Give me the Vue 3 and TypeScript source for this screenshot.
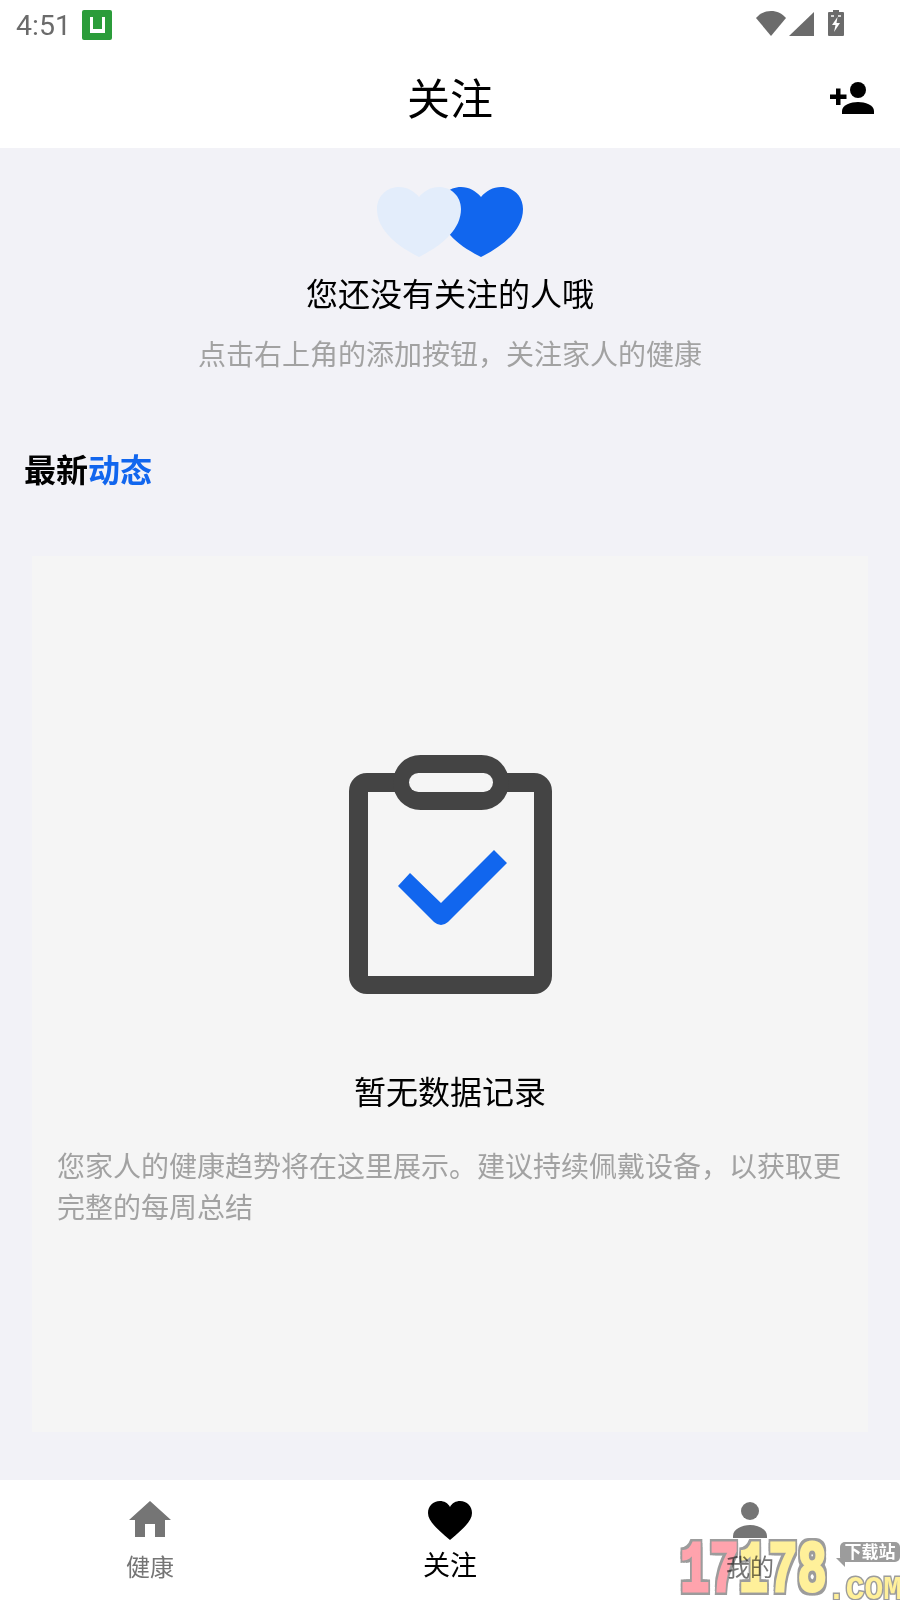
<script setup lang="ts">
const tabs = [
  { label: '健康', key: 'home', active: false },
  { label: '关注', key: 'heart', active: true },
  { label: '我的', key: 'user', active: false },
];
</script>

<template>
  <div class="page">
    <div class="status-bar">
      <div class="status-left">
        <span class="time">4:51</span>
        <span class="app-badge"><span class="app-badge-u"></span></span>
      </div>
      <div class="status-right">
        <svg class="wifi" width="30" height="25" viewBox="0 0 30 25"><path d="M0 7C4 2.500 9 0 15 0s11 2.500 15 7L15 25z" fill="#6b6b6b"/></svg>
        <svg class="signal" width="25" height="24" viewBox="0 0 25 24"><path d="M25 0v24H0z" fill="#6b6b6b"/></svg>
        <svg class="battery" width="16" height="26" viewBox="0 0 16 26"><path d="M5 0h6v2h4a1 1 0 0 1 1 1v22a1 1 0 0 1-1 1H1a1 1 0 0 1-1-1V3a1 1 0 0 1 1-1h4z" fill="#6b6b6b"/><path d="M3 5h3v2H3zM10 5h3v2h-3z" fill="#d8d8d8"/><path d="M9.500 7L4 15h3.500L6 22l6-9H8.500z" fill="#fff"/></svg>
      </div>
    </div>

    <header class="title-bar">
      <h1>关注</h1>
      <svg class="add-user" width="44" height="32" viewBox="0 0 44 32">
        <path d="M0 12.500h6V6.500h4.500v6h6V17h-6v6H6v-6H0z" fill="#000"/>
        <circle cx="28" cy="8" r="8" fill="#000"/>
        <path d="M12 32v-3c0-6 9-9 16-9s16 3 16 9v3z" fill="#000"/>
      </svg>
    </header>

    <main class="content">
      <section class="empty-follow">
        <div class="hearts">
          <svg width="146" height="70" viewBox="0 0 146 70">
            <path d="M104 70C80 58 62 42 62 22 62 9 72 0 84 0c8 0 15 4 20 10 5-6 12-10 20-10 12 0 22 9 22 22 0 20-18 36-42 48z" fill="#1166ee"/>
            <path d="M42 70C18 58 0 42 0 22 0 9 10 0 22 0c8 0 15 4 20 10 5-6 12-10 20-10 12 0 22 9 22 22 0 20-18 36-42 48z" fill="#e3edfb"/>
          </svg>
        </div>
        <p class="follow-title">您还没有关注的人哦</p>
        <p class="follow-sub">点击右上角的添加按钮，关注家人的健康</p>
      </section>

      <h2 class="feed-title">最新<span>动态</span></h2>

      <section class="feed-card">
        <svg class="clipboard" width="203" height="239" viewBox="0 0 203 239">
          <path fill-rule="evenodd" d="M18 18H185A18 18 0 0 1 203 36V221A18 18 0 0 1 185 239H18A18 18 0 0 1 0 221V36A18 18 0 0 1 18 18ZM19 37V221H185V37Z" fill="#444"/>
          <rect x="44" y="0" width="116" height="55" rx="27.500" fill="#444"/>
          <rect x="60" y="18" width="84" height="19" rx="9.500" fill="#f5f5f5"/>
          <path d="M49 131L61 118 92 148 145 95 158 108 99 167Q92 173 85 167Z" fill="#1166ee"/>
        </svg>
        <p class="feed-empty">暂无数据记录</p>
        <p class="feed-desc">您家人的健康趋势将在这里展示。建议持续佩戴设备，以获取更完整的每周总结</p>
      </section>
    </main>

    <nav class="tab-bar">
      <div v-for="tab in tabs" :key="tab.key" class="tab" :class="{ active: tab.active }">
        <div class="tab-icon">
          <svg v-if="tab.key === 'home'" width="42" height="36" viewBox="0 0 42 36"><path d="M21 0l21 19h-6v17H26V23H16v13H6V19H0z" fill="#757575"/></svg>
          <svg v-else-if="tab.key === 'heart'" width="44" height="39" viewBox="0 0 44 39"><path d="M22 39C8 27 0 20 0 12 0 5 5 0 12 0c4 0 8 2 10 6 2-4 6-6 10-6 7 0 12 5 12 12 0 8-8 15-22 27z" fill="#000"/></svg>
          <svg v-else class="user-icon" width="34" height="36" viewBox="0 0 34 36"><circle cx="17" cy="9" r="9" fill="#757575"/><path d="M0 36v-2c0-7 9-11 17-11s17 4 17 11v2z" fill="#757575"/></svg>
        </div>
        <span>{{ tab.label }}</span>
      </div>
    </nav>

    <div class="watermark">
      <span class="wm-digits"><i class="pink">1</i><i class="pink">7</i><i>1</i><i>7</i><i>8</i></span>
      <span class="wm-badge">下载站</span>
      <span class="wm-com">.COM</span>
    </div>
  </div>
</template>

<style>
html, body { margin: 0; padding: 0; }
</style>

<style scoped>
.page {
  position: relative;
  width: 900px;
  height: 1600px;
  display: flex;
  flex-direction: column;
  overflow: hidden;
  background: #f2f2f7;
  font-family: "Roboto", "Noto Sans CJK SC", sans-serif;
}
.status-bar {
  height: 49px;
  flex: none;
  display: flex;
  justify-content: space-between;
  align-items: center;
  background: #fff;
  padding: 0 56px 0 16px;
  box-sizing: border-box;
}
.status-left { display: flex; align-items: center; gap: 12px; }
.time { font-size: 28.500px; color: #6b6b6b; position: relative; top: 1px; width: 54px; }
.app-badge {
  width: 30px;
  height: 30px;
  background: #2b9c3a;
  border-radius: 2px;
  display: flex;
  align-items: center;
  justify-content: center;
}
.app-badge-u {
  width: 9px;
  height: 12px;
  border: 3px solid #fff;
  border-top: 0;
  border-bottom-width: 4px;
}
.status-right { display: flex; align-items: flex-end; height: 26px; margin-top: -3px; }
.signal { margin-left: 3px; }
.battery { margin-left: 14px; }
.title-bar {
  height: 99px;
  flex: none;
  position: relative;
  display: flex;
  align-items: center;
  justify-content: center;
  background: #fff;
  padding-bottom: 6px;
  box-sizing: border-box;
}
.title-bar h1 { margin: 0; font-size: 43px; font-weight: 400; color: #000; }
.add-user { position: absolute; right: 26px; top: 33px; }
.content { flex: 1; display: flex; flex-direction: column; }
.empty-follow { display: flex; flex-direction: column; align-items: center; padding-top: 39px; }
.hearts { height: 70px; }
.hearts svg { display: block; }
.follow-title { margin: 16px 0 0; font-size: 32px; line-height: 44px; color: #000; }
.follow-sub { margin: 19px 0 0; font-size: 28px; line-height: 40px; color: #a2a2a2; }
.feed-title { margin: 73px 0 0 24px; font-size: 32px; line-height: 44px; font-weight: 700; color: #000; }
.feed-title span { color: #1166ee; }
.feed-card {
  margin: 63px 32px 0;
  height: 876px;
  box-sizing: border-box;
  padding: 199px 25px 0;
  background: #f5f5f5;
  display: flex;
  flex-direction: column;
  align-items: center;
}
.clipboard { flex: none; }
.feed-empty { margin: 77px 0 0; font-size: 32px; line-height: 44px; color: #000; }
.feed-desc { margin: 32px 0 0; font-size: 28px; line-height: 41px; color: #a2a2a2; }
.tab-bar {
  height: 120px;
  flex: none;
  display: grid;
  grid-template-columns: repeat(3, 1fr);
  background: #fff;
}
.tab {
  display: flex;
  flex-direction: column;
  align-items: center;
  padding-top: 21px;
  font-size: 24px;
  color: #757575;
}
.tab-icon { height: 40px; }
.tab-icon svg { display: block; }
.user-icon { margin-top: 1px; }
.tab span { margin-top: 10px; line-height: 34px; }
.tab.active { color: #000; font-size: 27px; }
.tab.active span { margin-top: 8px; }
.watermark {
  position: absolute;
  left: 677px;
  top: 1538px;
  width: 223px;
  height: 62px;
  mix-blend-mode: multiply;
}
.wm-digits {
  position: absolute;
  left: 3px;
  top: -2px;
  font-family: "Liberation Mono", monospace;
  font-size: 72px;
  font-weight: 700;
  line-height: 72px;
  white-space: nowrap;
  color: #fff09a;
  -webkit-text-stroke: 3px #fff09a;
  text-shadow: 4px 0 #9c9c9c, -4px 0 #9c9c9c, 0 4px #9c9c9c, 0 -4px #9c9c9c, 4px 4px #9c9c9c, -4px 4px #9c9c9c, 4px -4px #9c9c9c, -4px -4px #9c9c9c;
  transform: scaleX(0.68);
  transform-origin: left top;
}
.wm-digits i { font-style: normal; }
.wm-digits .pink { color: #ffa3ad; -webkit-text-stroke-color: #ffa3ad; }
.wm-badge {
  position: absolute;
  left: 163px;
  top: 4px;
  width: 60px;
  height: 20px;
  border-radius: 5px;
  background: #9c9c9c;
  color: #fff;
  font-size: 17px;
  font-weight: 700;
  line-height: 20px;
  text-align: center;
}
.wm-badge::after {
  content: "";
  position: absolute;
  left: -4px;
  bottom: -5px;
  border-top: 9px solid #9c9c9c;
  border-left: 9px solid transparent;
}
.wm-com {
  position: absolute;
  left: 150px;
  top: 35px;
  font-family: "Liberation Mono", monospace;
  font-size: 34px;
  font-weight: 700;
  line-height: 34px;
  white-space: nowrap;
  color: #fff09a;
  -webkit-text-stroke: 3px #9c9c9c;
  paint-order: stroke fill;
  transform: scaleX(0.92);
  transform-origin: left top;
}
</style>
